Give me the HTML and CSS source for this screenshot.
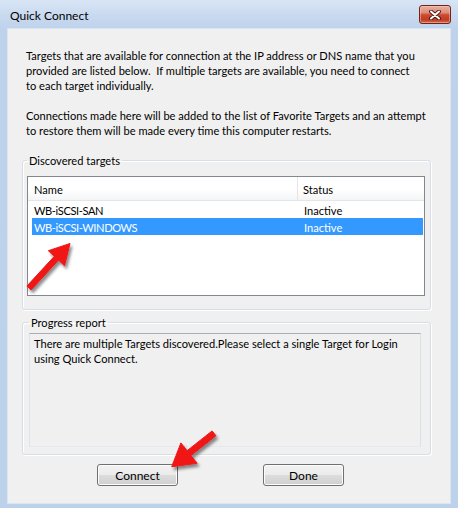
FILE: index.html
```html
<!DOCTYPE html>
<html lang="en">
<head>
<meta charset="utf-8">
<title>Quick Connect</title>
<link rel="stylesheet" href="styles.css">
</head>
<body>
<div class="window">
  <div class="titlebar">
    <span class="title">Quick Connect</span>
    <button class="close" type="button" aria-label="Close">
      <svg width="12" height="10" viewBox="0 0 12 10">
        <path d="M2 1.5 L10 8.5 M10 1.5 L2 8.5" stroke="#4a1a12" stroke-width="3.8" stroke-linecap="round" fill="none"/>
        <path d="M2 1.5 L10 8.5 M10 1.5 L2 8.5" stroke="#ffffff" stroke-width="2" stroke-linecap="round" fill="none"/>
      </svg>
    </button>
  </div>
  <div class="client">
    <p class="intro">Targets that are available for connection at the IP address or DNS name that you<br>provided are listed below.&nbsp; If multiple targets are available, you need to connect<br>to each target individually.</p>
    <p class="intro">Connections made here will be added to the list of Favorite Targets and an attempt<br>to restore them will be made every time this computer restarts.</p>
    <fieldset class="group group-targets">
      <legend>Discovered targets</legend>
      <div class="listview">
        <div class="lv-header">
          <div class="col col-name">Name</div>
          <div class="col col-status">Status</div>
        </div>
        <div class="lv-row">
          <span class="cell cell-name">WB-iSCSI-SAN</span>
          <span class="cell cell-status">Inactive</span>
        </div>
        <div class="lv-row selected">
          <span class="cell cell-name">WB-iSCSI-WINDOWS</span>
          <span class="cell cell-status">Inactive</span>
        </div>
      </div>
    </fieldset>
    <fieldset class="group group-progress">
      <legend>Progress report</legend>
      <div class="report">There are multiple Targets discovered.Please select a single Target for Login<br>using Quick Connect.</div>
    </fieldset>
    <div class="actions">
      <button class="btn" type="button">Connect</button>
      <button class="btn" type="button">Done</button>
    </div>
  </div>
  <svg class="annotations" width="458" height="508" viewBox="0 0 458 508">
    <defs>
      <filter id="shadow" x="-30%" y="-30%" width="160%" height="160%">
        <feDropShadow dx="2" dy="3" stdDeviation="1.6" flood-color="#000" flood-opacity="0.45"/>
      </filter>
    </defs>
    <polygon class="arrow" points="70,243.5 48.3,250.7 54.3,256.3 26.9,286.1 31.1,289.9 58.5,260.1 64.5,265.7"/>
    <polygon class="arrow" points="171.7,466.7 180.9,442.9 187.1,450.7 212.1,430.9 215.9,435.7 190.9,455.5 197.1,463.3"/>
  </svg>
</div>
</body>
</html>
```
FILE: styles.css
```css
html, body {
  margin: 0;
  padding: 0;
}

body {
  font-family: "Lato", "Open Sans", sans-serif;
  font-size: 11.1px;
  color: #000;
  background: #bcd1ea;
}

.window {
  position: relative;
  width: 458px;
  height: 508px;
  box-sizing: border-box;
  display: flex;
  flex-direction: column;
  background: linear-gradient(180deg, #d8e5f5 0, #c8d9ef 16px, #bed2eb 30px, #bcd1ea 100%);
  overflow: hidden;
}

.titlebar {
  height: 28px;
  flex: none;
  box-sizing: border-box;
  display: flex;
  justify-content: space-between;
  align-items: flex-start;
  padding: 0 7px 0 10px;
}

.title {
  font-size: 12px;
  line-height: 15px;
  padding-top: 8px;
  color: #000;
}

.close {
  margin-top: 5px;
  width: 32px;
  height: 19px;
  padding: 0;
  box-sizing: border-box;
  border: 1px solid #6e2418;
  border-radius: 3px;
  background: linear-gradient(180deg, #eab0a2 0%, #df8a76 40%, #cc4a31 52%, #c33c22 80%, #d16a50 100%);
  box-shadow: inset 0 0 0 1px rgba(255, 210, 200, 0.45);
  display: flex;
  align-items: center;
  justify-content: center;
}

.client {
  flex: 1;
  margin: 0 7px 4px;
  box-sizing: border-box;
  border: 1px solid #dbe5f1;
  background: #f0f0f0;
  padding-top: 19px;
}

.intro {
  margin: 0 18px 15px;
  line-height: 15px;
  white-space: nowrap;
}

.group {
  margin: 0 19px 0 14px;
  min-width: 0;
  border: 1px solid #d5dfe5;
  border-radius: 3px;
  box-shadow: inset 1px 1px 0 #fff, 1px 1px 0 #fff;
}

.group legend {
  padding: 0 2px;
  line-height: 15px;
}

.group-targets {
  margin-top: 1px;
  padding: 0 5px 13px 4px;
}

.group-progress {
  margin-top: 5px;
  padding: 0 9px 7px 6px;
}

.listview {
  margin-top: 8px;
  height: 120px;
  box-sizing: border-box;
  border: 1px solid #828790;
  background: #fff;
}

.lv-header {
  display: flex;
  height: 24px;
  box-sizing: border-box;
  border-bottom: 1px solid #e5e5e5;
  background: linear-gradient(180deg, #ffffff 0, #ffffff 55%, #f4f5f7 100%);
}

.col {
  line-height: 23px;
  padding-top: 1px;
  box-sizing: border-box;
}

.col-name {
  width: 270px;
  padding-left: 6px;
  border-right: 1px solid #e5e5e5;
}

.col-status {
  padding-left: 5px;
}

.lv-row {
  display: flex;
  height: 17px;
  line-height: 17px;
  margin: 0 1px 0 4px;
}

.cell {
  padding-top: 1px;
}

.cell-name {
  width: 266px;
  box-sizing: border-box;
  padding-left: 2px;
  letter-spacing: -0.4px;
}

.cell-status {
  padding-left: 6px;
}

.lv-row.selected {
  background: #3399ff;
  color: #fff;
}

.report {
  margin-top: 3px;
  height: 114px;
  box-sizing: border-box;
  border: 1px solid;
  border-color: #abadb3 #dbdfe6 #e3e9ef #e2e3ea;
  background: #f0f0f0;
  padding: 2px 4px;
  line-height: 15px;
  white-space: nowrap;
}

.actions {
  display: flex;
  gap: 85px;
  margin: 9px 0 0 89px;
}

.btn {
  width: 81px;
  height: 22px;
  box-sizing: border-box;
  padding: 0;
  border: 1px solid #707070;
  border-radius: 3px;
  background: linear-gradient(180deg, #f2f2f2 0%, #ebebeb 50%, #dddddd 50%, #cfcfcf 100%);
  box-shadow: inset 0 0 0 1px #fcfcfc;
  font: inherit;
  font-size: 12px;
  color: #000;
}

.annotations {
  position: absolute;
  left: 0;
  top: 0;
  pointer-events: none;
}

.arrow {
  fill: #f01414;
  stroke: #f01414;
  stroke-width: 1;
  stroke-linejoin: round;
  filter: url(#shadow);
}
```
